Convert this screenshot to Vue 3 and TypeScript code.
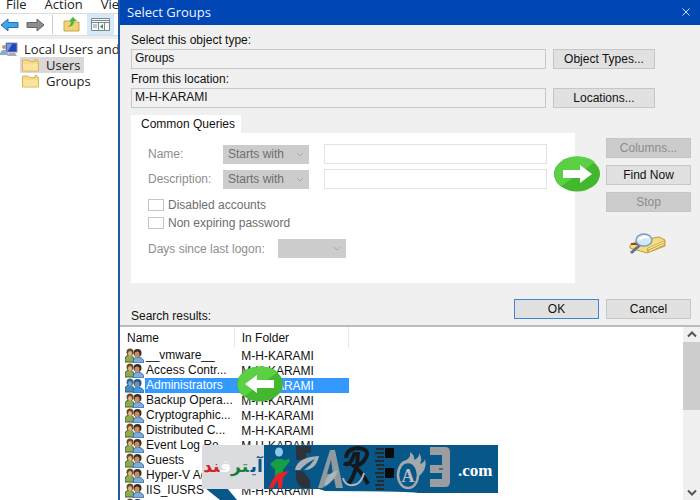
<script setup lang="ts">
import { ref } from 'vue'

const groups = ['__vmware__', 'Access Contr...', 'Administrators', 'Backup Opera...', 'Cryptographic...', 'Distributed C...', 'Event Log Re...', 'Guests', 'Hyper-V Ad...', 'IIS_IUSRS', 'Network Conf...']
const folder = 'M-H-KARAMI'
const selected = ref('Administrators')
const objectType = ref('Groups')
const location = ref(folder)
</script>

<template>
  <main class="screen">
    <aside class="console">
      <nav class="menu"><a href="#">File</a><a href="#">Action</a><a href="#">View</a></nav>
      <div class="tools">
        <button aria-label="Back"><svg width="19" height="14" viewBox="0 0 19 14"><path d="M1 7 8 1V4.500H18V9.500H8V13Z" fill="#3da5e8" stroke="#2a6fae" /></svg></button>
        <button aria-label="Forward"><svg width="19" height="14" viewBox="0 0 19 14"><path d="M18 7 11 1V4.500H1V9.500H11V13Z" fill="#8d8d8d" stroke="#666" /></svg></button>
        <i class="split"></i>
        <button class="up" aria-label="Up one level"><svg width="17" height="15" viewBox="0 0 17 15"><path d="M1 4H6L8 5H16V14H1Z" fill="#f3d27a" stroke="#c9a54c" /><path d="M4 10Q8 9 8 4H6L10 0 14 4H11Q11 10 4 10Z" fill="#4fb53a" /></svg></button>
        <button class="active" aria-label="Show tree"><svg width="19" height="13" viewBox="0 0 19 13"><path d="M.5.5H18.500V12.500H.5Z" fill="#f6f8fa" stroke="#7d8790" /><path d="M1 2.500H18M1 4.500H18M7.500 4V12M13.500 4V12" stroke="#7d8790" /><path d="M2 7H6M2 9H6" stroke="#87939c" /><path d="M12 6V11L9 8.500Z" fill="#3b9c3b" /></svg></button>
      </div>
      <ul class="tree">
        <li><svg width="20" height="15" viewBox="0 0 20 15"><path d="M6 1H17V10H6Z" fill="#2447b8" stroke="#8390a8" /><path d="M7 2H12L8 9H7Z" fill="#6f9be8" /><path d="M9 11H15L17 14H7Z" fill="#a8adb5" /><circle cx="4" cy="5" r="2" fill="#c99367" /><path d="M0 13Q0 8 4 8 8 8 8 13Z" fill="#8fa9c8" /></svg><span>Local Users and Groups</span></li>
        <li v-for="(name, i) in ['Users', 'Groups']" :key="name" class="child" :class="{ current: i === 0 }">
          <div class="node"><svg width="17" height="14" viewBox="0 0 17 14"><path d="M.5 2H6L8 3.500H13V1.500H15V3.500H16.500V13H.5Z" fill="#f6da86" stroke="#d6b45b" /><path d="M1 6H16V12.500H1Z" fill="#fbe39b" /></svg><span>{{ name }}</span></div>
        </li>
      </ul>
    </aside>

    <section class="dialog">
      <header class="title"><span>Select Groups</span><button aria-label="Close"><svg width="8" height="8" viewBox="0 0 8 8"><path d="M.5.5 7.500 7.500M7.500.5.5 7.500" stroke="#d4e0f5" /></svg></button></header>
      <div class="form">
        <label for="otype">Select this object type:</label>
        <div class="line"><input id="otype" v-model="objectType" readonly /><button class="btn">Object Types...</button></div>
        <label for="loc" class="second">From this location:</label>
        <div class="line"><input id="loc" v-model="location" readonly /><button class="btn">Locations...</button></div>
        <div class="query">
          <div class="tabs">
            <button class="tab">Common Queries</button>
            <div class="pane">
              <div class="criteria"><label for="name">Name:</label><div class="drop"><select disabled aria-label="Name match"><option>Starts with</option></select><svg width="8" height="5" viewBox="0 0 8 5"><path d="M1 1 4 4 7 1" /></svg></div><input id="name" disabled /></div>
              <div class="criteria"><label for="desc">Description:</label><div class="drop"><select disabled aria-label="Description match"><option>Starts with</option></select><svg width="8" height="5" viewBox="0 0 8 5"><path d="M1 1 4 4 7 1" /></svg></div><input id="desc" disabled /></div>
              <div class="checks">
                <label class="check"><input type="checkbox" disabled />Disabled accounts</label>
                <label class="check"><input type="checkbox" disabled />Non expiring password</label>
              </div>
              <div class="logon"><label for="days">Days since last logon:</label><div class="drop"><select id="days" disabled></select><svg width="8" height="5" viewBox="0 0 8 5"><path d="M1 1 4 4 7 1" /></svg></div></div>
            </div>
          </div>
          <div class="actions">
            <button class="btn" disabled>Columns...</button>
            <button class="btn">Find Now</button>
            <button class="btn" disabled>Stop</button>
            <svg class="search" width="38" height="22" viewBox="0 0 38 22"><path d="M1 12 8 8 30 4 36 7 36 13 18 20 1 15Z" fill="#f5dc83" stroke="#b99a45" /><path d="M18 15 36 7V13L18 20Z" fill="#cda94a" /><path d="M19 16 35 9M20 18 35 11" stroke="#fff0ae" /><path d="M2 11H9" stroke="#8d4c28" stroke-width="2" /><path d="M11 12 2 20" stroke="#6a7385" stroke-width="3" /><ellipse cx="15" cy="7" rx="8" ry="6" fill="#cfeafa" stroke="#8599b4" stroke-width="1.500" /><path d="M10 7Q14 2 20 5" fill="none" stroke="#fff" stroke-width="2" /></svg>
            <svg class="badge find" width="46" height="36" viewBox="0 0 46 36"><ellipse cx="23" cy="18" rx="23" ry="17.500" fill="#43b82f" /><path d="M7 30.500A23 17.500 0 0 1 41 6Z" fill="#5bd044" /><path d="M9 14H26V9L38 18 26 27V22H9Z" fill="#fff" /></svg>
          </div>
        </div>
        <div class="confirm"><button class="btn ok">OK</button><button class="btn">Cancel</button></div>
        <p class="caption">Search results:</p>
      </div>

      <div class="results">
        <table>
          <thead><tr><th>Name</th><th>In Folder</th></tr></thead>
          <tbody>
            <tr v-for="group in groups" :key="group" :class="{ selected: group === selected }" @click="selected = group">
              <td><div class="cell"><svg width="19" height="15" viewBox="0 0 19 15"><path d="M0 14V10Q1 7 5 7 9 7 9 14Z" :fill="group === selected ? '#3c8fd6' : '#8cab53'" stroke="#47612b" /><circle cx="5" cy="4" r="3.500" :fill="group === selected ? '#35658f' : '#6b4a2c'" /><ellipse cx="5" cy="5.500" rx="2" ry="2.500" :fill="group === selected ? '#77a5c4' : '#dfb684'" /><path d="M8 15Q8 9 13 9 19 10 19 15Z" :fill="group === selected ? '#3e97e8' : '#79afe0'" stroke="#3a6b9d" /><circle cx="12.500" cy="5" r="4" :fill="group === selected ? '#26547c' : '#3a2b24'" /><ellipse cx="12" cy="6.500" rx="2.500" ry="3" :fill="group === selected ? '#6796b5' : '#c78f61'" /></svg><span>{{ group }}</span></div></td>
              <td>{{ folder }}</td>
            </tr>
          </tbody>
        </table>
        <div class="scroll"><button aria-label="Scroll up"><svg width="10" height="7" viewBox="0 0 10 7"><path d="M1 5.500 5 1.500 9 5.500" /></svg></button><i></i><button class="down" aria-label="Scroll down"><svg width="10" height="7" viewBox="0 0 10 7"><path d="M1 1.500 5 5.500 9 1.500" /></svg></button></div>
        <svg class="badge pick" width="46" height="36" viewBox="0 0 46 36"><ellipse cx="23" cy="18" rx="23" ry="17.500" fill="#43b82f" /><path d="M7 30.500A23 17.500 0 0 1 41 6Z" fill="#5bd044" /><path d="M37 14H20V9L8 18 20 27V22H37Z" fill="#fff" /></svg>
        <div class="mark">
          <svg class="plate" width="296" height="55" viewBox="0 0 296 55"><path d="M62 0H296V48H216Q208 46 123 46L117 44H62Z" fill="#075789" /><path d="M3 43H25L35 55H18Z" fill="#075789" /></svg>
          <div class="persian" dir="rtl" lang="fa"><span class="b">آی</span><span class="gap"></span><span class="g">تر</span><span class="w">ف</span><span class="r">ند</span></div>
          <svg class="art" width="190" height="48" viewBox="0 0 190 48">
            <ellipse cx="15" cy="7" rx="4" ry="4.500" fill="#8cc9e8" />
            <path d="M6 19 12 14H18Q23 17 24 13L26 16 19 25V29L11 33V24Z" fill="#17a043" />
            <path d="M5 43Q9 31 15 28L25 26 19 33 18 43H14V35L9 43Z" fill="#e3222b" />
            <path d="M32 1H47V8H42V15H32ZM32 26H39L46 35V43H38Q32 39 32 31Z" fill="#2c3238" />
            <path d="M31 25Q33 12 55 11 52 25 40 25Q47 20 51 14 42 18 36 25Z" fill="#a9b1b7" />
            <path d="M54 43 66 5H71L79 43H72L70 34Q63 32 59 43ZM63 29H69L67 15Z" fill="#8f999f" />
            <path d="M60 42Q62 28 74 25 70 37 60 42Z" fill="#aeb5b9" />
            <path d="M82 13Q83 3 95 3 107 5 101 14 98 20 90 21 98 27 104 39M94 7Q94 26 84 40M80 18Q86 23 91 7" fill="none" stroke="#15191d" stroke-width="4" />
            <path d="M79 33Q82 43 93 39 98 36 100 28" fill="none" stroke="#abb4ba" stroke-width="2" />
            <path d="M112 4H120M111 8H120M113 12H120M111 16H120M112 20H120M113 24H120M111 28H120M112 32H120M113 36H120M111 40H120M112 44H120" stroke="#252b31" stroke-width="2" />
            <path d="M121 3H130V13H121ZM121 23H130V33H121Z" fill="#080a0c" />
            <path d="M134 27Q134 17 142 15 147 13 146 7 151 10 150 15 156 12 155 8 159 14 156 19 160 18 161 14 164 24 154 32Z" fill="#a3a9ad" />
            <ellipse cx="144" cy="30" rx="10" ry="13" fill="#075789" stroke="#a3a9ad" stroke-width="2.500" />
            <text x="144" y="37" text-anchor="middle" class="letter">A</text>
            <path d="M166 2H181Q186 2 186 7V37Q186 42 181 42H166V34H178V28H166V20H178V10H166Z" fill="#9a9ea1" />
            <path d="M175 24H179" stroke="#60676c" stroke-width="2" />
          </svg>
          <b class="com">.com</b>
        </div>
      </div>
    </section>
  </main>
</template>

<style>
body { margin: 0; background: #fff; }
</style>
<style scoped>
* { box-sizing: border-box; }
.screen { display: flex; height: 100vh; overflow: hidden; font: 12px/14px "Liberation Sans", Arial, sans-serif; color: #111; }
button, input, select { font: inherit; color: inherit; margin: 0; }
svg { display: block; flex: none; }
.console { width: 118px; flex: none; overflow: hidden; white-space: nowrap; font: 13px/16px "Open Sans", sans-serif; color: #222; }
.menu { display: flex; gap: 18px; padding: 0 6px; height: 13px; line-height: 9px; }
.menu a { color: inherit; text-decoration: none; }
.tools { display: flex; align-items: center; gap: 7px; height: 23px; border-top: 1px solid #ddd; border-bottom: 1px solid #ddd; }
.tools button { border: 0; padding: 0; background: none; }
.split { width: 1px; height: 19px; background: #ccc; }
.tools .up { margin-left: 3px; }
.tools .active { background: #d5e9f9; padding: 4px; }
.tree { list-style: none; margin: 0; padding: 2px 0 0; border-top: 3px solid #eee; }
.tree li { display: flex; gap: 4px; height: 16px; align-items: center; }
.child { padding-left: 20px; }
.node { display: flex; gap: 7px; align-items: center; padding: 0 4px 0 2px; }
.current .node { background: #d9d9d9; }
.dialog { flex: 1; min-width: 0; display: flex; flex-direction: column; background: #f0f0f0; border-left: 2px solid #2456a4; }
.title { flex: none; height: 25px; display: flex; justify-content: space-between; align-items: center; padding: 0 10px 2px 7px; background: #0046b4; color: #eef4ff; font: 13px/16px "Open Sans", sans-serif; }
.title button { border: 0; padding: 0; background: none; }
.form { flex: none; padding: 8px 9px 0 11px; height: 300px; }
.form > label { display: block; height: 16px; line-height: 14px; }
.form > .second { margin-top: 3px; }
.line { display: flex; gap: 7px; padding-right: 36px; }
.line input { flex: 1; min-width: 0; height: 20px; padding: 0 3px 3px; background: #f1f1f1; border: 1px solid #c8c8c8; outline: 0; }
.btn { height: 20px; padding: 0; background: #e1e1e1; border: 1px solid #c6c6c6; }
.line .btn { width: 102px; }
.btn:disabled { background: #cccccc; color: #8c8c8c; }
.query { display: flex; justify-content: space-between; margin-top: 7px; }
.tabs { flex: 1; min-width: 0; }
.tab { display: block; width: 110px; height: 18px; border: 0; background: #fff; padding: 0 0 0 4px; }
.pane { height: 150px; background: #fff; padding: 11px 28px 0 17px; color: #8d8d8d; }
.criteria { display: flex; align-items: center; height: 20px; margin-bottom: 5px; }
.criteria label { width: 75px; }
.criteria input { flex: 1; min-width: 0; margin-left: 15px; height: 20px; border: 1px solid #e2e2e2; background: #fff; }
.drop { position: relative; width: 86px; height: 19px; }
.drop select { width: 100%; height: 100%; padding: 0 5px; border: 0; background: #ccc; color: #6e6e6e; appearance: none; opacity: 1; }
.drop svg { position: absolute; right: 5px; top: 7px; fill: none; stroke: #aaa; }
.checks { padding: 2px 0 7px; }
.check { display: flex; align-items: center; gap: 4px; height: 18px; color: #6e6e6e; }
.check input { appearance: none; width: 16px; height: 12px; border: 1px solid #c6c6c6; background: #fff; }
.logon { display: flex; align-items: center; gap: 13px; }
.logon .drop { width: 68px; }
.actions { position: relative; display: flex; flex-direction: column; gap: 7px; width: 85px; margin: 23px 0 0 31px; }
.search { margin: 14px 0 0 23px; }
.badge { position: absolute; }
.find { left: -52px; top: 18px; }
.confirm { display: flex; justify-content: flex-end; gap: 7px; margin-top: 16px; }
.confirm .btn { width: 85px; }
.confirm .ok { border-color: #3c87d0; }
.caption { margin: -10px 0 0; }
.results { position: relative; flex: 1; min-height: 0; overflow: hidden; display: flex; justify-content: space-between; background: #fff; border-top: 2px solid #bbb; }
table { border-collapse: collapse; table-layout: fixed; width: 229px; height: max-content; white-space: nowrap; }
th, td { padding: 0; text-align: left; font-weight: normal; }
th { height: 21px; padding-left: 7px; border-right: 1px solid #e8e8e8; }
tr > :last-child { padding-left: 7px; }
td { height: 15px; }
.cell { display: flex; gap: 1px; padding-left: 5px; height: 15px; }
.cell span { padding: 0 1px; flex: 1; line-height: 15px; }
.selected td:last-child, .selected .cell span { background: #3399ff; color: #fff; }
.scroll { width: 17px; display: flex; flex-direction: column; background: #f0f0f0; }
.scroll button { height: 15px; border: 0; padding: 4px; background: none; }
.scroll svg { fill: none; stroke: #555; stroke-width: 2; }
.scroll i { height: 68px; background: #cdcdcd; }
.scroll .down { margin-top: auto; }
.pick { left: 117px; top: 39px; }
.mark { position: absolute; left: 82px; top: 118px; display: flex; width: 296px; height: 48px; }
.plate { position: absolute; left: 0; top: 0; }
.persian { position: relative; width: 62px; height: 44px; background: #dadcdf; font: bold 17px/42px "DejaVu Sans", sans-serif; text-align: center; white-space: nowrap; }
.gap { padding-left: 2px; }
.b { color: #075789; } .g { color: #168039; } .w { color: #fff; } .r { color: #d82129; }
.art { position: relative; }
.letter { font: bold 18px "Liberation Serif", serif; fill: #b9bec1; }
.com { position: relative; margin-left: 4px; font: bold 17px/52px "Liberation Serif", serif; color: #fff; }
</style>
